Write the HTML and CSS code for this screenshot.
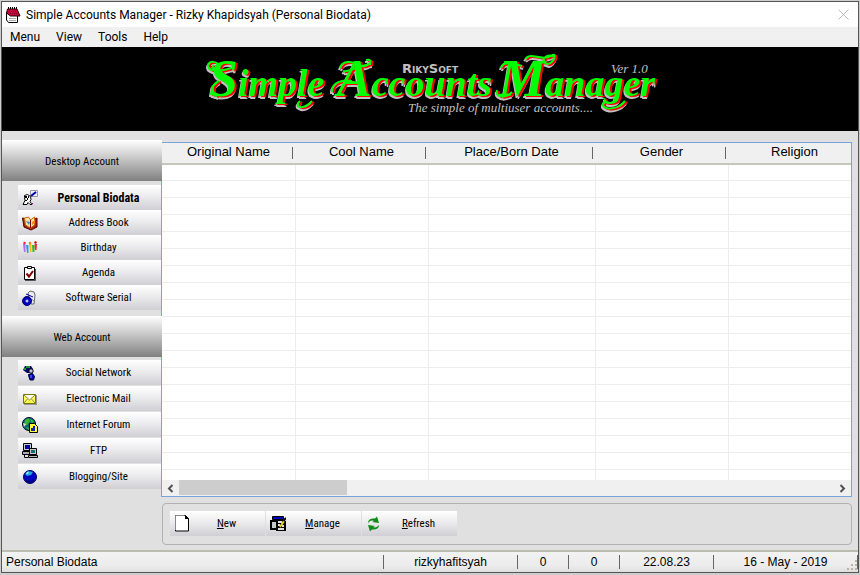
FILE: index.html
```html
<!DOCTYPE html>
<html lang="en">
<head>
<meta charset="utf-8">
<title>Simple Accounts Manager</title>
<link rel="stylesheet" href="styles.css">
</head>
<body>
<div class="window">
  <header class="titlebar">
    <svg class="app-icon" width="16" height="16" viewBox="0 0 16 16"><path d="M1.500 5v8l2 2.500h9V9" fill="#fff" stroke="#000"/><path d="M2.500 2h9.500l3 7H5.500L1.500 6z" fill="#c8003c" stroke="#200"/><path d="M3.500 0v2M5.500 0v2M7.500 0v2M9.500 0v2M11.500 0v2" stroke="#000"/><path d="M4 4.500h8M5 6.500h8" stroke="#800030" stroke-dasharray="1 1"/><path d="M4 11.500h7M4 13.500h7" stroke="#aaa"/></svg>
    <h1 class="title">Simple Accounts Manager - Rizky Khapidsyah (Personal Biodata)</h1>
    <button class="close" aria-label="Close"><svg width="11" height="11" viewBox="0 0 11 11"><path d="M.5.5l10 10M10.5.5l-10 10" stroke="#bcbcbc"/></svg></button>
  </header>
  <nav class="menu">
    <button>Menu</button><button>View</button><button>Tools</button><button>Help</button>
  </nav>

  <div class="banner">
    <svg class="logo" width="450" height="84" viewBox="0 0 450 84">
      <g class="logo-name">
        <text x="4" y="49"><tspan class="cap">S</tspan>imple</text>
        <text x="132" y="49"><tspan class="cap">A</tspan>ccounts</text>
        <text x="294" y="49"><tspan class="cap">M</tspan>anager</text>
        <path d="M26 21C14 25 4 25 3 19s12-5 9 0-6 1-3-1M14 34C6 38 5 46 12 49M135 21c2-8 13-7 19-3 8 5 17-7 7-5M138 24c5 2 16-6 28-7M127 45c-1-9 10-13 20-11M292 43c-2 9 10 8 15 2M296 21c1-8 14-4 21-2M320 12c6-8 16 3 26-3 8-6 1 12-6 7-5-5 5-10 8-6"/>
        <path d="M107 54C98 64 88 60 95 54M420 54C410 66 392 62 400 54"/>
      </g>
      <text class="logo-maker" x="197" y="26">RikySoft</text>
      <text class="logo-note" x="406" y="26">Ver 1.0</text>
      <text class="logo-note" x="203" y="65">The simple of multiuser accounts....</text>
    </svg>
  </div>

  <div class="body">
    <aside class="sidebar">
      <button class="group">Desktop Account</button>
      <div class="items">
        <button class="item current"><svg width="16" height="16" viewBox="0 0 16 16"><path d="M8.500.5h7v6h-7z" fill="#eef" stroke="#99a"/><path d="M9 6l5-4" stroke="#00a" stroke-width="2"/><path d="M2.500 5.500l3-1 3 2 .5 3-1 2 2 3h-2l-2-2-1 2h-4l2-4-.5-3z" fill="#fff" stroke="#000"/><path d="M3 6h2v2H3zM6 6h1v2H6zM3 10h2v1H3zM5 8h1v2H5z"/><path d="M9 13h2v1H9z" fill="#a0a"/></svg><span>Personal Biodata</span></button>
        <button class="item"><svg width="16" height="16" viewBox="0 0 16 16"><path d="M.5 3l5 1 3 2 6.500-3v9l-6 3-7-3z" fill="#a82818" stroke="#500"/><path d="M2.500 3l4-1 2 3 4-3v8l-4 3-5-3z" fill="#ffe3a0" stroke="#c60"/><path d="M8.500 5v8" stroke="#700"/><path d="M4 6l3 4 1-3z" fill="#278cc8"/><path d="M10 7l3-2v3l-3 2z" fill="#e82"/></svg><span>Address Book</span></button>
        <button class="item"><svg width="16" height="16" viewBox="0 0 16 16"><path d="M1 4h2.500v8H2z" fill="#b46ce0"/><path d="M4 5h2.500v8H5z" fill="#28a0e8"/><path d="M7 4h2.500v8H8z" fill="#f8b818"/><path d="M10 5h2.500v7h-2z" fill="#35b830"/><path d="M12.500 4H15l-.5 6h-1.500z" fill="#e03030"/><circle cx="2.500" cy="3" r="1.200" fill="#e24"/><circle cx="8" cy="3" r="1.200" fill="#f70"/><circle cx="13.500" cy="2.500" r="1.200" fill="#c00"/></svg><span>Birthday</span></button>
        <button class="item"><svg width="16" height="16" viewBox="0 0 16 16"><path d="M2.500 2.500h10v12h-10z" fill="#fff" stroke="#000"/><path d="M13.500 4v11.500H3" fill="none" stroke="#555"/><path d="M5.500 1.500h4v2h-4z" fill="#eee" stroke="#000"/><path d="M4.500 8.500l2.500 3 4-5.500" fill="none" stroke="#800000" stroke-width="2"/></svg><span>Agenda</span></button>
        <button class="item"><svg width="16" height="16" viewBox="0 0 16 16"><path d="M6 3l2-2 4 1 1 3-1 9H9z" fill="#eee" stroke="#667"/><path d="M4 4l7 3" stroke="#00a"/><path d="M8 8l4 3" stroke="#888"/><circle cx="5" cy="11" r="4.500" fill="#0000c0" stroke="#006"/><path d="M5 9.500v3M3.500 11h3" stroke="#fff"/></svg><span>Software Serial</span></button>
      </div>
      <button class="group">Web Account</button>
      <div class="items spaced">
        <button class="item"><svg width="16" height="16" viewBox="0 0 16 16"><path d="M3 1h6l2 3v4H5L1 5z" fill="#00006c"/><path d="M4 1h4v2H4zM2 3h2v2H2z" fill="#1a9830"/><circle cx="9" cy="6" r="2.200" fill="#bcc4dc" stroke="#000"/><path d="M6.500 9.500l4-1 2 3-1 3.500H8l-1-3z" fill="#0000b0" stroke="#003"/><path d="M8 10h2v3H8z" fill="#3448e8"/></svg><span>Social Network</span></button>
        <button class="item"><svg width="16" height="16" viewBox="0 0 16 16"><path d="M2 4h13v10H2z" fill="#999"/><path d="M1.500 3.500h12v9h-12z" fill="#ffff50" stroke="#777800"/><path d="M2 4h11L7.500 9z" fill="#fffff0"/><path d="M2 4l5.500 5L13 4M2 12l3.500-4M13 12L9.500 8" fill="none" stroke="#885"/></svg><span>Electronic Mail</span></button>
        <button class="item"><svg width="16" height="16" viewBox="0 0 16 16"><circle cx="7" cy="7" r="6.500" fill="#086a70" stroke="#002"/><path d="M3 3l4-2 1 3-3 4-3 1zM8 2l4 2-2 3zM3 10l4 1v2z" fill="#39b838"/><path d="M1 6l3 1-2 3z" fill="#ddd"/><path d="M7.500 6.500h5l3 3v6h-8z" fill="#ffff40" stroke="#000"/><path d="M9 14v-3h2V9h2v5z" fill="#1424a8"/></svg><span>Internet Forum</span></button>
        <button class="item"><svg width="16" height="16" viewBox="0 0 16 16"><path d="M1.500.5h8v7h-8z" fill="#c8c8c8" stroke="#000"/><path d="M3 2h5v4H3z" fill="#0000a0"/><path d="M.5 8.500h8v3h-8z" fill="#aaa" stroke="#000"/><path d="M7.500 5.500h7v6h-7z" fill="#c8c8c8" stroke="#000"/><path d="M9 7h4v3H9z" fill="#087070"/><path d="M6.500 12.500h9v2h-9z" fill="#bbb" stroke="#000"/><path d="M2.500 12v2.500H6" fill="none" stroke="#000"/></svg><span>FTP</span></button>
        <button class="item"><svg width="16" height="16" viewBox="0 0 16 16"><circle cx="8" cy="8" r="6.500" fill="#0000c0" stroke="#000060"/><path d="M3 5l3-3 5 1-2 3-4 1z" fill="#20a8e0"/><path d="M4 4l2-1 1 1-2 1z" fill="#bff"/><path d="M3 10l5 2 4-2v2l-4 2-3-1z" fill="#00007c"/></svg><span>Blogging/Site</span></button>
      </div>
    </aside>

    <main class="main">
      <div class="list">
        <div class="grid">
          <table>
            <colgroup><col class="c"><col class="c"><col class="wide"><col class="c"><col class="c"></colgroup>
            <thead><tr><th>Original Name</th><th>Cool Name</th><th>Place/Born Date</th><th>Gender</th><th>Religion</th></tr></thead>
            <tbody><tr><td></td><td></td><td></td><td></td><td></td></tr></tbody>
          </table>
        </div>
        <div class="scroll">
          <button aria-label="Scroll left"><svg width="7" height="9" viewBox="0 0 7 9"><path d="M5.500 1L2 4.500 5.500 8" fill="none" stroke="#505050" stroke-width="2"/></svg></button>
          <div class="track"><div class="thumb"></div></div>
          <button aria-label="Scroll right"><svg width="7" height="9" viewBox="0 0 7 9"><path d="M1.500 1L5 4.500 1.500 8" fill="none" stroke="#505050" stroke-width="2"/></svg></button>
        </div>
      </div>
      <div class="tools">
        <button class="item"><svg width="16" height="17" viewBox="0 0 16 17"><path d="M1.500.5h10l3 3v12.500h-13z" fill="#fff" stroke="#000"/><path d="M1.500 15V.5h9" fill="none" stroke="#888"/><path d="M11 0v4h4z" fill="#000"/></svg><span><u>N</u>ew</span></button>
        <button class="item"><svg width="16" height="16" viewBox="0 0 16 16"><path d="M2.500.5h11v3h-11z" fill="#0000c0" stroke="#000"/><path d="M0 4h13v1h3v10H6v-1H0z" fill="#000"/><path d="M2 6h4v6H2z" fill="#c8c8c8"/><path d="M8 5h4v2H8zM8 8h2v2H8zM8 12h6v2H8zM12 9h2v2h-2z" fill="#e0e0e0"/><path d="M10 11l4-6" stroke="#e8d020" stroke-width="2"/><path d="M13.500 5L16 2" stroke="#000" stroke-width="2"/></svg><span><u>M</u>anage</span></button>
        <button class="item"><svg width="16" height="16" viewBox="0 0 16 16"><path d="M2 7c0-4 4-5 7-4.500L11 .5l2 6.500-7-1 2-1c-3-1-4 0-6 2zM13 9c0 4-4 5-7 4.500l-2 2L2 9l7 1-2 1c3 1 4 0 6-2z" fill="#108a18"/></svg><span><u>R</u>efresh</span></button>
      </div>
    </main>
  </div>

  <footer class="status">
    <span class="page">Personal Biodata</span>
    <span class="user">rizkyhafitsyah</span>
    <span class="count">0</span>
    <span class="count">0</span>
    <span class="time">22.08.23</span>
    <span class="date">16 - May - 2019</span>
    <svg class="grip" width="12" height="12" viewBox="0 0 12 12"><path d="M9 1h2v2H9zM5 5h2v2H5zM9 5h2v2H9zM1 9h2v2H1zM5 9h2v2H5zM9 9h2v2H9z" fill="#b8b4a4"/></svg>
  </footer>
</div>
</body>
</html>
```

FILE: styles.css
```css
* { box-sizing: border-box; }

body {
  margin: 0;
  padding: 1px;
  height: 100vh;
  background: #cdcdcd;
  font: 13px/16px "Liberation Sans", Arial, sans-serif;
  color: #000;
}

button {
  margin: 0;
  padding: 0;
  border: 0;
  background: none;
  color: inherit;
  font: inherit;
}

svg { display: block; flex: none; }

.window {
  display: flex;
  flex-direction: column;
  height: calc(100vh - 3px);
  border: 1px solid #555;
  background: #e0e0e0;
}

/* Title and menu */
.titlebar {
  display: flex;
  align-items: center;
  height: 25px;
  padding: 0 9px 0 3px;
  background: #fff;
}

.title {
  flex: 1;
  margin: 0 0 0 5px;
  font: 12px/16px Roboto, "Noto Sans", sans-serif;
}

.menu {
  display: flex;
  gap: 16px;
  height: 20px;
  padding: 0 8px;
  background: #f0f0f0;
  font: 12px/20px Roboto, "Noto Sans", sans-serif;
}

/* Banner */
.banner {
  display: flex;
  justify-content: center;
  height: 84px;
  background: #000;
}

.logo { overflow: visible; }

.logo-name {
  fill: #0f0;
  font: italic bold 38px "Liberation Serif", serif;
  filter: drop-shadow(2px 1px 0 #f00) drop-shadow(-1px 2px 0 #c0c0c0);
}

.logo-name .cap { font-size: 52px; }
.logo-name path { fill: none; stroke: #0f0; stroke-width: 2; }

.logo-maker {
  fill: #c0c0c0;
  font: bold 13px "DejaVu Sans", sans-serif;
  font-variant: small-caps;
}

.logo-note { fill: #c0c0c0; font: italic 13px "Liberation Serif", serif; }

/* Body */
.body {
  display: grid;
  grid-template-columns: 159px 1fr;
  flex: 1;
  min-height: 0;
  padding: 9px 6px 5px 0;
}

.group {
  display: block;
  position: relative;
  width: 160px;
  height: 41px;
  padding-top: 2px;
  background: linear-gradient(#fff, #e0e0e0 25%, #808080);
  font: 11px/20px "Roboto Condensed", Roboto, sans-serif;
}

.items {
  display: flex;
  flex-direction: column;
  padding: 4px 0 6px 16px;
}

.items.spaced { gap: 1px; padding-top: 3px; }

.item {
  display: flex;
  align-items: center;
  height: 25px;
  padding: 0 2px 0 4px;
  background: linear-gradient(#fff, #ececee 45%, #cfcfd4);
  font: 11px/20px "Roboto Condensed", Roboto, sans-serif;
}

.item span { flex: 1; padding-top: 1px; text-align: center; }
.item.current { font-size: 12px; font-weight: bold; }

.main {
  display: flex;
  flex-direction: column;
  gap: 6px;
  min-width: 0;
  padding-top: 2px;
}

/* Account list */
.list {
  display: flex;
  flex-direction: column;
  flex: 1;
  min-height: 0;
  border: 1px solid #7aa2dc;
  background: #fff;
}

.grid {
  flex: 1;
  min-height: 0;
  overflow: hidden;
  background: repeating-linear-gradient(#fff 0 16px, #ededed 16px 17px) 0 21px;
}

table {
  width: 699px;
  height: 100%;
  table-layout: fixed;
  border-collapse: collapse;
}

.c { width: 133px; }
.wide { width: 167px; }

th {
  height: 21px;
  padding: 0 0 3px;
  border-bottom: 2px solid #c6c6ba;
  background: linear-gradient(#666, #666) right 2px top 4px / 1px 12px no-repeat #f0f0f0;
  font-weight: normal;
  line-height: 16px;
}

td { padding: 0; border-right: 1px solid #ededed; }

.scroll {
  display: flex;
  height: 16px;
  background: #f0f0f0;
}

.scroll button {
  display: flex;
  align-items: center;
  justify-content: center;
  width: 17px;
}

.track { flex: 1; }
.thumb { width: 168px; height: 15px; background: #cdcdcd; }

.tools {
  display: flex;
  gap: 1px;
  height: 42px;
  margin-left: 1px;
  padding: 7px;
  border: 1px solid #b2b2b2;
  border-radius: 4px;
}

.tools .item { width: 95px; }

/* Status bar */
.status {
  display: flex;
  align-items: center;
  position: relative;
  height: 22px;
  border-top: 2px solid #bcbcb0;
  background: linear-gradient(#f3f3f3, #ececec 70%, #dedede);
  font-size: 12px;
}

.status > span {
  height: 14px;
  border-right: 1px solid #666;
  line-height: 14px;
  text-align: center;
}

.status .page { flex: 1; padding-left: 4px; text-align: left; }
.user { width: 134px; }
.count { width: 51px; }
.time { width: 94px; }
.date { width: 144px; }

.grip { position: absolute; right: 0; bottom: 1px; }
```
